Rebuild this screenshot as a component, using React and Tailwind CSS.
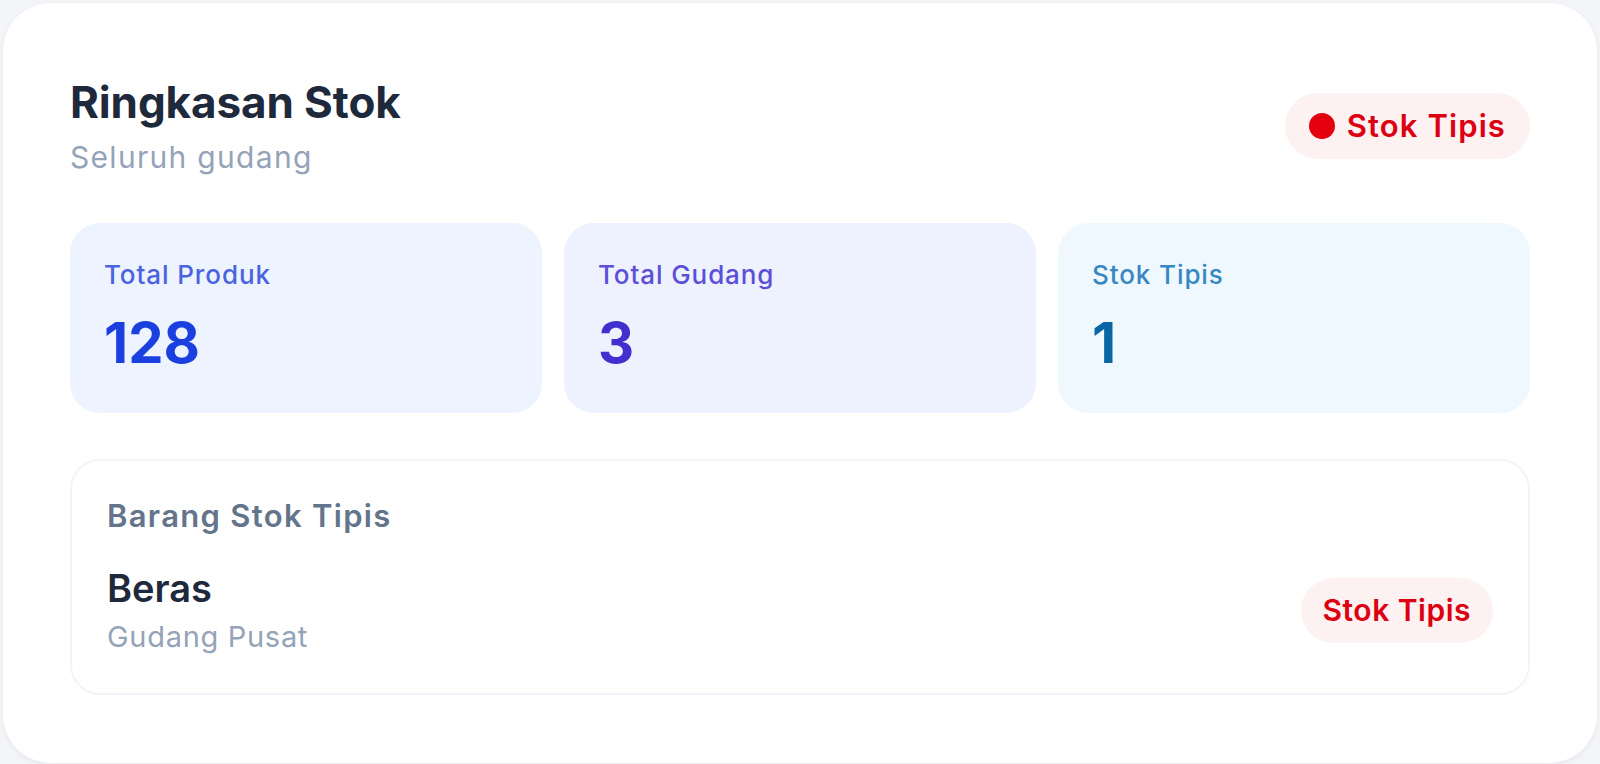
import React from 'react';

const stats = [
  { label: 'Total Produk', value: '128', bg: 'bg-[#edf3ff]', labelColor: 'text-[#4a63df]', valueColor: 'text-[#1c3fe0]' },
  { label: 'Total Gudang', value: '3', bg: 'bg-[#eef1fe]', labelColor: 'text-[#5b50d6]', valueColor: 'text-[#4130d0]' },
  { label: 'Stok Tipis', value: '1', bg: 'bg-[#f0f8ff]', labelColor: 'text-[#3787c0]', valueColor: 'text-[#0a65a5]' },
];

const App = () => {
  return (
    <div className="min-h-screen bg-[#f3f5f9] p-[3px] font-['Inter','Noto_Sans',sans-serif]">
      {/* Card */}
      <div className="bg-white rounded-[48px] shadow-[0_2px_6px_rgba(15,23,42,0.06)] px-[67px] pt-[72px] pb-[68px]">
        {/* Header */}
        <div className="flex justify-between items-center">
          <div>
            <h2 className="text-[44px] leading-[54px] font-bold text-[#1e293b] tracking-[-0.1px]">Ringkasan Stok</h2>
            <p className="mt-[8px] text-[30px] leading-[40px] text-[#94a3b8] tracking-[1.3px]">Seluruh gudang</p>
          </div>
          <div className="flex items-center gap-[12px] h-[66px] px-[24px] rounded-full bg-[#fef1f1]">
            <span className="w-[26px] h-[26px] rounded-full bg-[#e4000f]" />
            <span className="text-[31px] font-semibold text-[#dc0012] tracking-[1.1px]">Stok Tipis</span>
          </div>
        </div>

        {/* Stats */}
        <div className="grid grid-cols-3 gap-[22px] mt-[46px]">
          {stats.map((s) => (
            <div key={s.label} className={`${s.bg} rounded-[30px] h-[190px] px-[34px] pt-[35px]`}>
              <p className={`text-[26px] leading-[34px] font-medium tracking-[0.9px] ${s.labelColor}`}>{s.label}</p>
              <p className={`mt-[23px] text-[56px] leading-[56px] font-bold ${s.valueColor}`}>{s.value}</p>
            </div>
          ))}
        </div>

        {/* Low stock list */}
        <div className="mt-[46px] border-2 border-[#f1f4f8] rounded-[30px] px-[35px] pt-[36px] pb-[38px]">
          <p className="text-[31px] leading-[38px] font-semibold text-[#64748b] tracking-[1.3px]">Barang Stok Tipis</p>
          <div className="mt-[30px] flex justify-between items-center">
            <div>
              <p className="text-[38px] leading-[46px] font-semibold text-[#1e293b]">Beras</p>
              <p className="mt-[8px] text-[29px] leading-[36px] text-[#94a3b8] tracking-[0.7px]">Gudang Pusat</p>
            </div>
            <div className="flex items-center h-[65px] px-[22px] rounded-full bg-[#fef1f1]">
              <span className="text-[30px] font-semibold text-[#dc0012] tracking-[0.5px]">Stok Tipis</span>
            </div>
          </div>
        </div>
      </div>
    </div>
  );
};

export default App;
